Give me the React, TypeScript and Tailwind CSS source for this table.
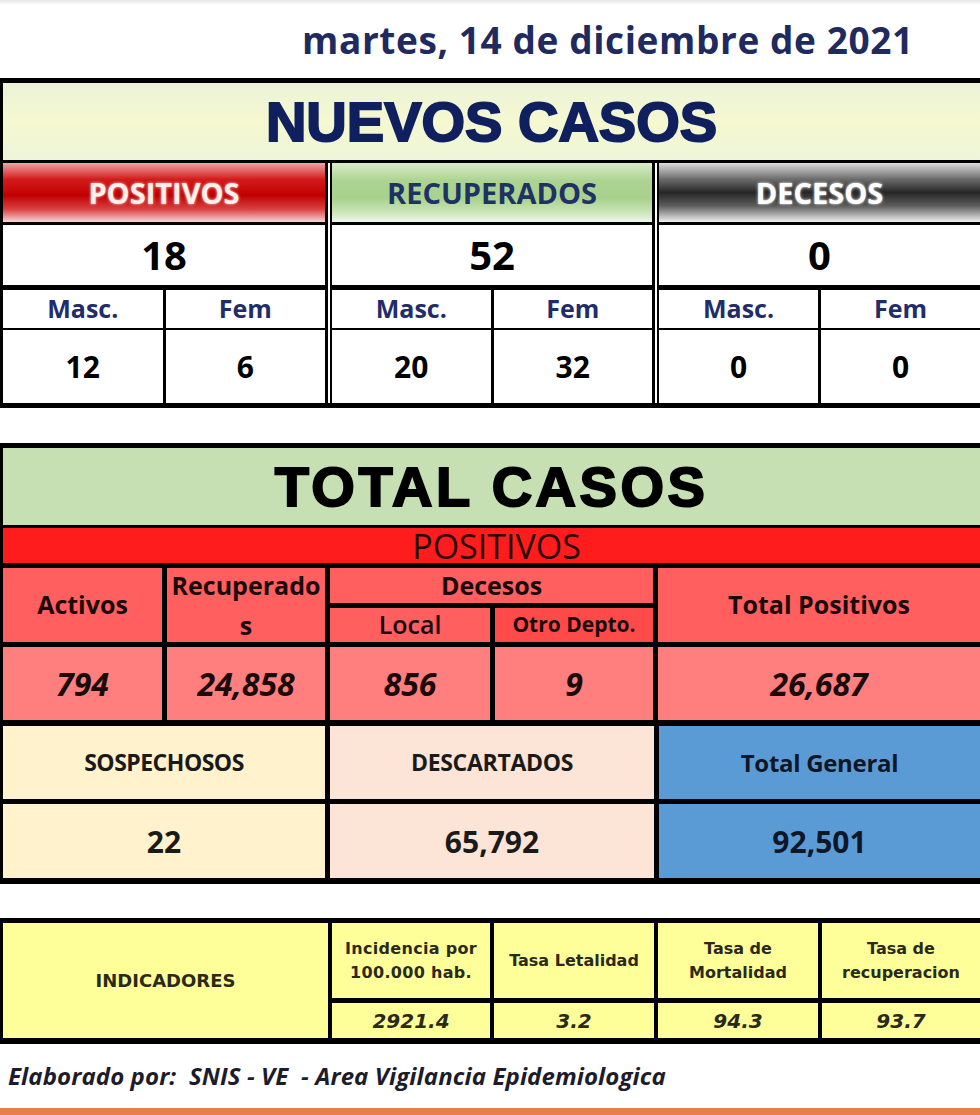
import React from 'react'

type Group = {
  title: string
  total: string
  masc: string
  fem: string
  head: string
  titleColor: string
}

const groups: Group[] = [
  {
    title: 'POSITIVOS',
    total: '18',
    masc: '12',
    fem: '6',
    head: 'bg-[linear-gradient(to_bottom,#f2a4a4_0%,#d31a1a_28%,#c00000_55%,#d84040_78%,#f9d6d6_100%)]',
    titleColor: 'text-[#fff1ea] [text-shadow:0_0_3px_#ffd0d0]',
  },
  {
    title: 'RECUPERADOS',
    total: '52',
    masc: '20',
    fem: '32',
    head: 'bg-[linear-gradient(to_bottom,#d9edca_0%,#acd391_30%,#a9d18e_60%,#c9e4b6_82%,#eef7e8_100%)]',
    titleColor: 'text-[#1f3264]',
  },
  {
    title: 'DECESOS',
    total: '0',
    masc: '0',
    fem: '0',
    head: 'bg-[linear-gradient(to_bottom,#dcdcdc_0%,#6a6a6a_28%,#262626_50%,#5a5a5a_72%,#f0f0f0_100%)]',
    titleColor: 'text-white [text-shadow:0_0_3px_#ffffff]',
  },
]

function NuevoGroup({ g }: { g: Group }) {
  return (
    <div className="flex flex-col flex-1">
      <div className={`h-[59px] flex items-center justify-center ${g.head}`}>
        <span className={`text-[29px] font-bold ${g.titleColor}`}>{g.title}</span>
      </div>
      <div className="mt-[3px] h-[60px] bg-white flex items-center justify-center text-[40px] font-bold text-black">
        {g.total}
      </div>
      <div className="mt-[5px] h-[37px] grid grid-cols-2 gap-x-[3px]">
        <div className="bg-white flex items-center justify-center text-[25px] font-bold text-[#1f2d6a]">Masc.</div>
        <div className="bg-white flex items-center justify-center text-[25px] font-bold text-[#1f2d6a]">Fem</div>
      </div>
      <div className="mt-[3px] h-[73px] grid grid-cols-2 gap-x-[3px]">
        <div className="bg-white flex items-center justify-center text-[30px] font-bold text-black">{g.masc}</div>
        <div className="bg-white flex items-center justify-center text-[30px] font-bold text-black">{g.fem}</div>
      </div>
    </div>
  )
}

function Sep() {
  return (
    <div className="w-[7px] flex justify-center">
      <div className="w-[2px] bg-white" />
    </div>
  )
}

export default function App() {
  return (
    <div className="w-[980px] h-[1115px] overflow-hidden bg-white font-['Open_Sans',sans-serif]">
      <div className="h-[5px] bg-gradient-to-b from-[#e6e6e6] to-white" />
      <div className="h-[73px] flex items-center pl-[302px] pb-[4px]">
        <span className="text-[37px] font-bold text-[#1f2a5e] tracking-[0.6px] leading-none">
          martes, 14 de diciembre de 2021
        </span>
      </div>

      {/* NUEVOS CASOS */}
      <div className="bg-black pl-[3px] pt-[5px] pb-[5px] flex flex-col">
        <div className="h-[77px] flex items-center justify-center bg-[linear-gradient(to_bottom,#ebf3d9_0%,#f5f8d0_50%,#eef5d8_100%)]">
          <span className="font-['Liberation_Sans',sans-serif] font-bold text-[56px] leading-none text-[#10205e] [-webkit-text-stroke:2px_#10205e]">
            NUEVOS CASOS
          </span>
        </div>
        <div className="mt-[3px] flex">
          <div className="w-[322px] flex">
            <NuevoGroup g={groups[0]} />
          </div>
          <Sep />
          <div className="w-[320px] flex">
            <NuevoGroup g={groups[1]} />
          </div>
          <Sep />
          <div className="flex-1 flex">
            <NuevoGroup g={groups[2]} />
          </div>
        </div>
      </div>

      {/* TOTAL CASOS */}
      <div className="mt-[35px] bg-black pl-[3px] pt-[5px] pb-[6px] flex flex-col">
        <div className="h-[77px] flex items-center justify-center bg-[#c6e0b4]">
          <span className="font-['Liberation_Sans',sans-serif] font-bold text-[56px] leading-none text-black tracking-[3.5px] [-webkit-text-stroke:2px_#000]">
            TOTAL CASOS
          </span>
        </div>
        <div className="mt-[3px] h-[35px] bg-[#ff1c1c] flex items-center justify-center">
          <span className="text-[34px] leading-none text-[#2b0505] ml-[10px]">POSITIVOS</span>
        </div>
        <div className="mt-[5px] grid grid-cols-[159px_158px_160px_158px_1fr] grid-rows-[35px_34px_73px] gap-[5px]">
          <div className="row-span-2 bg-[#ff5f5f] flex items-center justify-center text-[25px] font-bold text-[#1a0a0a]">
            Activos
          </div>
          <div className="row-span-2 bg-[#ff5f5f] flex flex-col items-center justify-center text-[25px] font-bold leading-[40px] text-[#1a0a0a]">
            <span>Recuperado</span>
            <span>s</span>
          </div>
          <div className="col-span-2 bg-[#ff5f5f] flex items-center justify-center text-[25px] font-bold text-[#1a0a0a]">
            Decesos
          </div>
          <div className="row-span-2 bg-[#ff5f5f] flex items-center justify-center text-[25px] font-bold text-[#1a0a0a]">
            Total Positivos
          </div>
          <div className="bg-[#ff5f5f] flex items-center justify-center text-[25px] font-semibold text-[#1a0a0a]">
            Local
          </div>
          <div className="bg-[#ff4a4a] flex items-center justify-center text-[21px] font-bold text-[#1a0a0a]">
            Otro Depto.
          </div>
          <div className="bg-[#ff7f7f] flex items-center justify-center text-[32px] font-bold italic text-[#1a0a0a]">
            794
          </div>
          <div className="bg-[#ff7f7f] flex items-center justify-center text-[32px] font-bold italic text-[#1a0a0a]">
            24,858
          </div>
          <div className="bg-[#ff7f7f] flex items-center justify-center text-[32px] font-bold italic text-[#1a0a0a]">
            856
          </div>
          <div className="bg-[#ff7f7f] flex items-center justify-center text-[32px] font-bold italic text-[#1a0a0a]">
            9
          </div>
          <div className="bg-[#ff7f7f] flex items-center justify-center text-[32px] font-bold italic text-[#1a0a0a]">
            26,687
          </div>
        </div>
        <div className="mt-[6px] grid grid-cols-[322px_324px_1fr] grid-rows-[73px_74px] gap-x-[5px] gap-y-[5px]">
          <div className="bg-[#fff2cc] flex items-center justify-center text-[23px] font-bold tracking-[-0.5px] text-[#1a1a1a]">
            SOSPECHOSOS
          </div>
          <div className="bg-[#fce4d6] flex items-center justify-center text-[23px] font-bold tracking-[-0.3px] text-[#1a1a1a]">
            DESCARTADOS
          </div>
          <div className="bg-[#5b9bd5] flex items-center justify-center text-[24px] font-bold tracking-[-0.3px] text-[#0f1626]">
            Total General
          </div>
          <div className="bg-[#fff2cc] flex items-center justify-center text-[30px] font-bold text-[#1a1a1a]">22</div>
          <div className="bg-[#fce4d6] flex items-center justify-center text-[30px] font-bold text-[#1a1a1a]">65,792</div>
          <div className="bg-[#5b9bd5] flex items-center justify-center text-[30px] font-bold text-[#0f1626]">92,501</div>
        </div>
      </div>

      {/* INDICADORES */}
      <div className="mt-[34px] bg-black pl-[3px] pt-[5px] pb-[6px] font-['DejaVu_Sans',sans-serif] text-[#2a2a1a]">
        <div className="grid grid-cols-[325px_158px_160px_160px_1fr] grid-rows-[75px_35px] gap-x-[4px] gap-y-[5px]">
          <div className="row-span-2 bg-[#ffff99] flex items-center justify-center text-[18px] font-bold">
            INDICADORES
          </div>
          <div className="bg-[#ffff99] flex flex-col items-center justify-center text-[16px] font-bold leading-[24px] text-center tracking-[0.3px]">
            <span>Incidencia por</span>
            <span>100.000 hab.</span>
          </div>
          <div className="bg-[#ffff99] flex items-center justify-center text-[16px] font-bold text-center">
            Tasa Letalidad
          </div>
          <div className="bg-[#ffff99] flex flex-col items-center justify-center text-[16px] font-bold leading-[24px] text-center">
            <span>Tasa de</span>
            <span>Mortalidad</span>
          </div>
          <div className="bg-[#ffff99] flex flex-col items-center justify-center text-[16px] font-bold leading-[24px] text-center">
            <span>Tasa de</span>
            <span>recuperacion</span>
          </div>
          <div className="bg-[#ffff99] flex items-center justify-center text-[20px] font-bold italic">2921.4</div>
          <div className="bg-[#ffff99] flex items-center justify-center text-[20px] font-bold italic">3.2</div>
          <div className="bg-[#ffff99] flex items-center justify-center text-[20px] font-bold italic">94.3</div>
          <div className="bg-[#ffff99] flex items-center justify-center text-[20px] font-bold italic">93.7</div>
        </div>
      </div>

      <div className="h-[64px] flex items-center pl-[8px]">
        <span className="text-[24px] font-bold italic text-[#1c1c2c] whitespace-pre tracking-[0.1px]">
          Elaborado por:  SNIS - VE  - Area Vigilancia Epidemiologica
        </span>
      </div>
      <div className="h-[7px] bg-[#e8804a]" />
    </div>
  )
}
